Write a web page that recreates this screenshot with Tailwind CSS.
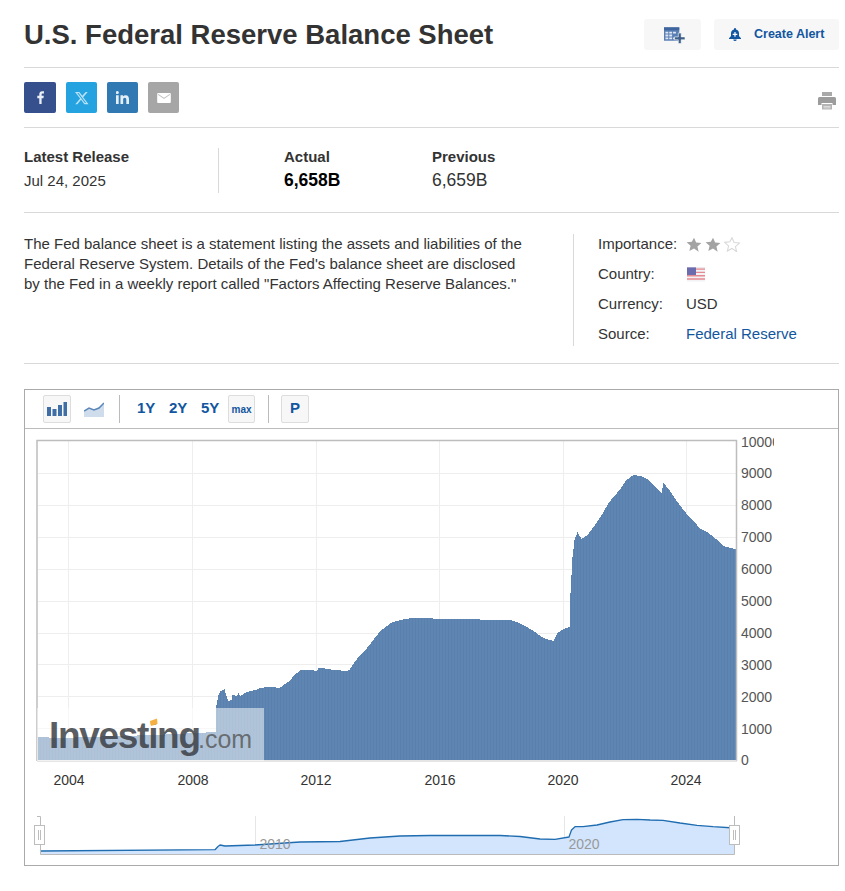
<!DOCTYPE html>
<html lang="en">
<head>
  <meta charset="UTF-8" />
  <title>U.S. Federal Reserve Balance Sheet</title>
  <script src="https://cdn.jsdelivr.net/npm/@tailwindcss/browser@4"></script>
</head>
<body class="bg-white text-[#333] font-['Liberation_Sans',Arial,sans-serif] text-[15px]">
  <div class="w-[845px] h-[891px] overflow-hidden pl-[24px] pr-[6px]">

    <!-- Title -->
    <div class="flex justify-between h-[68px] pt-[19px] border-b border-[#d9d9d9]">
      <h1 class="text-[27.5px] leading-[31px] font-bold">U.S. Federal Reserve Balance Sheet</h1>
      <div class="flex gap-[13px] h-[31px]">
        <button class="w-[57px] bg-[#f7f7f8] rounded-[3px] flex items-center justify-center pl-[3px]">
          <svg width="21" height="18" viewBox="0 0 22 18">
            <rect x="0" y="1" width="16" height="14" fill="#5a7fb5" />
            <rect x="0" y="1" width="16" height="3" fill="#3f659f" />
            <path d="M1.5 5.5h3v2h-3zM5.5 5.5h3v2h-3zM9.5 5.5h3v2h-3zM1.5 8.5h3v2h-3zM5.5 8.5h3v2h-3zM1.5 11.5h3v2h-3zM5.5 11.5h3v2h-3zM9.5 11.5h3v2h-3z" fill="#dfe7f3" />
            <path d="M15 7v4h-4v3h4v4h3v-4h4v-3h-4V7z" fill="#3f5f88" stroke="#fff" stroke-width=".6" />
          </svg>
        </button>
        <button class="w-[125px] bg-[#f7f7f8] rounded-[3px] flex items-center pl-[15px] pb-[1px] gap-[13px] text-[#1256a0] text-[12.5px] font-bold">
          <svg width="12" height="13" viewBox="0 0 12 13">
            <path d="M6 0a1 1 0 0 1 1 1v.6c2 .5 3 2 3 4V8l2 2.200V11H0v-.8L2 8V5.600c0-2 1-3.500 3-4V1a1 1 0 0 1 1-1zM4.300 11.500h3.400a1.700 1.500 0 0 1-3.400 0z" fill="#1256a0" />
            <path d="M5.400 4h1.200v1.800h1.700V7H6.600v1.800H5.400V7H3.700V5.800h1.700z" fill="#fff" />
          </svg>
          Create Alert
        </button>
      </div>
    </div>

    <!-- Share icons -->
    <div class="flex justify-between h-[60px] pt-[14px] border-b border-[#d9d9d9]">
      <div class="flex gap-[10px] h-[31px]">
        <a class="w-[32px] rounded-[2px] bg-[#36508e] flex items-center justify-center">
          <svg width="7" height="13" viewBox="0 0 8 15"><path d="M5.300 15V8.300h2.100l.4-2.700H5.300V4.100c0-.8.3-1.300 1.300-1.300H8V.4C7.600.3 6.800.2 5.900.2 3.900.2 2.600 1.400 2.600 3.600v2H.3v2.700h2.300V15z" fill="#e9edf5" /></svg>
        </a>
        <a class="w-[31px] rounded-[2px] bg-[#25a3e0] flex items-center justify-center">
          <svg width="14" height="14" viewBox="0 0 24 24"><path d="M18.200 1.500h3.600l-7.800 9 9.200 12.100h-7.200l-5.600-7.400-6.400 7.400H.4l8.400-9.600L0 1.500h7.400l5.100 6.700zM17 20.500h2L6.100 3.500H4z" fill="#b9e2f7" /></svg>
        </a>
        <a class="w-[31px] rounded-[2px] bg-[#3079b3] flex items-center justify-center">
          <svg width="13" height="13" viewBox="0 0 14 14"><path d="M0 4.700h2.900V14H0zM1.450 0a1.600 1.600 0 1 1 0 3.300 1.600 1.600 0 0 1 0-3.300zM4.800 4.700h2.700V6c.5-.9 1.500-1.500 2.900-1.500 2.800 0 3.600 1.800 3.600 4.400V14h-2.900V9.500c0-1.200-.3-2.300-1.600-2.300s-1.800 1-1.800 2.300V14H4.800z" fill="#e3eef6" /></svg>
        </a>
        <a class="w-[31px] rounded-[2px] bg-[#a6a6a6] flex items-center justify-center">
          <svg width="14" height="10" viewBox="0 0 15 11"><rect width="15" height="11" rx="1" fill="#fff" /><path d="M1 1.500l6.500 4.500L14 1.500" fill="none" stroke="#c4c4c4" stroke-width="1.200" /></svg>
        </a>
      </div>
      <div class="pt-[10px] pr-[3px]">
        <svg width="18" height="18" viewBox="0 0 18 18">
          <path d="M4 0h10v4H4z" fill="#a9a9a9" />
          <path d="M1.500 5h15A1.500 1.500 0 0 1 18 6.500V13h-3.500v-2h-11v2H0V6.500A1.500 1.500 0 0 1 1.500 5z" fill="#9c9c9c" />
          <path d="M4 12h10v5.500H4z" fill="#b4b4b4" />
          <path d="M5.500 14h7v.8h-7zM5.500 15.500h7v.8h-7z" fill="#e6e6e6" />
        </svg>
      </div>
    </div>

    <!-- Latest release -->
    <div class="h-[85px] pt-[20px] border-b border-[#d9d9d9]">
      <div class="flex h-[45px]">
        <div class="w-[195px] border-r border-[#d9d9d9]">
          <div class="font-bold leading-[18px]">Latest Release</div>
          <div class="leading-[18px] mt-[6px]">Jul 24, 2025</div>
        </div>
        <div class="w-[148px] ml-[65px]">
          <div class="font-bold leading-[18px]">Actual</div>
          <div class="font-bold text-[17.5px] leading-[20px] mt-[4px] text-black">6,658B</div>
        </div>
        <div>
          <div class="font-bold leading-[18px]">Previous</div>
          <div class="text-[17.5px] leading-[20px] mt-[4px]">6,659B</div>
        </div>
      </div>
    </div>

    <!-- Description and overview -->
    <div class="flex h-[151px] pt-[21px] border-b border-[#d9d9d9]">
      <p class="w-[505px] mr-[44px] leading-[20px]">The Fed balance sheet is a statement listing the assets and liabilities of the Federal Reserve System. Details of the Fed's balance sheet are disclosed by the Fed in a weekly report called "Factors Affecting Reserve Balances."</p>
      <div class="h-[112px] border-l border-[#d9d9d9] pl-[24px] flex flex-col gap-[10px] leading-[20px]">
        <div class="flex">
          <span class="w-[88px]">Importance:</span>
          <span class="flex items-center gap-[3px]">
            <svg width="16" height="15" viewBox="1 1 22 21"><path d="M12 2l3 6.800 7.400.7-5.600 4.900 1.700 7.300L12 17l-6.500 3.700 1.700-7.300L1.600 8.500 9 7.800z" fill="#a3a3a3" /></svg>
            <svg width="16" height="15" viewBox="1 1 22 21"><path d="M12 2l3 6.800 7.400.7-5.600 4.900 1.700 7.300L12 17l-6.500 3.700 1.700-7.300L1.600 8.500 9 7.800z" fill="#a3a3a3" /></svg>
            <svg width="16" height="15" viewBox="1 1 22 21"><path d="M12 2l3 6.800 7.400.7-5.600 4.900 1.700 7.300L12 17l-6.500 3.700 1.700-7.300L1.600 8.500 9 7.800z" fill="#fff" stroke="#d8d8d8" stroke-width="1.500" /></svg>
          </span>
        </div>
        <div class="flex">
          <span class="w-[88px]">Country:</span>
          <span class="flex items-center pl-[1px]">
            <svg width="18" height="15" viewBox="0 0 19 15">
              <rect width="19" height="15" fill="#f3f3f6" />
              <path d="M0 1h19v1.500H0zM0 4.500h19V6H0zM0 8h19v1.500H0zM0 11.500h19V13H0z" fill="#e58a90" />
              <rect width="19" height="1" y="0" fill="#e9dfe3" />
              <rect width="9.500" height="8" fill="#6a6cae" />
            </svg>
          </span>
        </div>
        <div class="flex">
          <span class="w-[88px]">Currency:</span>
          <span>USD</span>
        </div>
        <div class="flex">
          <span class="w-[88px]">Source:</span>
          <a class="text-[#1256a0]">Federal Reserve</a>
        </div>
      </div>
    </div>

    <!-- Chart -->
    <div class="mt-[25px] w-[815px] h-[477px] border border-[#aaa]">
      <div class="relative flex items-center h-[39px] border-b border-[#bbb] pl-[18px] pb-[1px]">
        <button class="w-[28px] h-[28px] bg-[#f7f7f7] border border-[#ddd] rounded-[2px] flex items-center justify-center">
          <svg width="20" height="14" viewBox="0 0 20 14">
            <path d="M0 5h4v9H0zM5.500 7h4v7h-4zM11 3h4v11h-4zM16.500 0H20v14h-3.500z" fill="#3f6ea6" />
          </svg>
        </button>
        <span class="w-[20px] h-[18px] ml-[13px]">
          <svg width="20" height="18" viewBox="0 0 20 18">
            <path d="M0 11l5-3 5 2 5-2 5-5v14H0z" fill="#cfdcec" />
            <path d="M0 11l5-3 5 2 5-2 5-5" fill="none" stroke="#5b87b8" stroke-width="1.500" />
          </svg>
        </span>
        <span class="w-[1px] h-[28px] bg-[#bbb] ml-[15px]"></span>
        <div class="flex gap-[14px] ml-[17px] text-[15px] font-bold text-[#1256a0]">
          <span class="w-[18px]">1Y</span>
          <span class="w-[18px]">2Y</span>
          <span class="w-[18px]">5Y</span>
        </div>
        <button class="w-[27px] h-[28px] ml-[9px] mt-[1px] bg-[#f7f7f7] border border-[#ddd] rounded-[2px] text-[10px] font-bold text-[#1256a0]">max</button>
        <span class="w-[1px] h-[28px] bg-[#bbb] ml-[13px]"></span>
        <button class="w-[28px] h-[28px] ml-[12px] bg-[#f7f7f7] border border-[#ddd] rounded-[2px] text-[15px] font-bold text-[#1256a0]">P</button>
      </div>

      <svg class="block" width="813" height="437" viewBox="25 429 813 437" font-family="'Liberation Sans', Arial, sans-serif" font-size="14">
        <defs>
          <pattern id="bars" x="37" y="0" width="3" height="10" patternUnits="userSpaceOnUse">
            <rect width="3" height="10" fill="#5f86b3" />
            <rect width="1" height="10" fill="#5a80ad" />
          </pattern>
          <clipPath id="labelClip"><rect x="738" y="430" width="36" height="30" /></clipPath>
        </defs>

        <!-- grid -->
        <g stroke="#eeeeee" stroke-width="1">
          <path d="M38 473.500H736M38 505.500H736M38 537.500H736M38 569.500H736M38 601.500H736M38 633.500H736M38 664.500H736M38 696.500H736M38 728.500H736" />
          <path d="M68.500 441V760M192.500 441V760M316.500 441V760M439.500 441V760M563.500 441V760M686.500 441V760" />
        </g>

        <!-- balance area, filled in by the script below -->
        <path id="area" fill="url(#bars)" />

        <!-- plot frame -->
        <path d="M37 761V440.500H736.500V761" fill="none" stroke="#bdbdbd" stroke-width="1.500" />
        <path d="M37 761H737" stroke="#dcdcdc" stroke-width="1.500" />

        <!-- watermark -->
        <rect x="37" y="708" width="227" height="53" fill="#fff" fill-opacity=".5" />
        <text x="49" y="748" font-size="37" font-weight="700" letter-spacing="-1.300" fill="#3c3f45" fill-opacity=".85">Investing</text>
        <text x="198" y="748" font-size="25" fill="#555" fill-opacity=".8">.com</text>
        <path d="M150 721l7-2.500.5 5.500-6.500 2z" fill="#f5b041" />

        <!-- y axis -->
        <g fill="#555">
          <text x="741" y="447" clip-path="url(#labelClip)">10000</text>
          <text x="741" y="478">9000</text>
          <text x="741" y="510">8000</text>
          <text x="741" y="542">7000</text>
          <text x="741" y="574">6000</text>
          <text x="741" y="606">5000</text>
          <text x="741" y="638">4000</text>
          <text x="741" y="670">3000</text>
          <text x="741" y="702">2000</text>
          <text x="741" y="734">1000</text>
          <text x="741" y="765">0</text>
        </g>

        <!-- x axis -->
        <g fill="#333" text-anchor="middle">
          <text x="69" y="785">2004</text>
          <text x="193" y="785">2008</text>
          <text x="316" y="785">2012</text>
          <text x="440" y="785">2016</text>
          <text x="563" y="785">2020</text>
          <text x="686" y="785">2024</text>
        </g>

        <!-- navigator -->
        <path d="M255.500 816V846M564.500 816V838" stroke="#e6e6e6" />
        <path fill="#d2e5fc" d="M41 854V851L215 849.700L218 846.500L220 845L225 846L255 845L300 842L340 841.500L370 838L400 836L430 835.500L500 835.500L520 836.500L540 839L555 839.300L569 837L571.500 830L575 826.700L583 826.700L597 825L610 822L623 819.700L637 819.300L650 820L663 820.300L680 823L697 825.300L713 826.700L734 828V854Z" />
        <path fill="none" stroke="#1f6cb0" stroke-width="1.300" stroke-linejoin="round" d="M41 851L215 849.700L218 846.500L220 845L225 846L255 845L300 842L340 841.500L370 838L400 836L430 835.500L500 835.500L520 836.500L540 839L555 839.300L569 837L571.500 830L575 826.700L583 826.700L597 825L610 822L623 819.700L637 819.300L650 820L663 820.300L680 823L697 825.300L713 826.700L734 828" />
        <text x="275" y="849" text-anchor="middle" fill="#999">2010</text>
        <text x="584" y="849" text-anchor="middle" fill="#999">2020</text>
        <path d="M37 816.500H40.500V854.500H734.500V816" fill="none" stroke="#bbbbbb" />
        <g fill="#fff" stroke="#bdbdbd">
          <rect x="34.500" y="825.500" width="10" height="19" />
          <rect x="729.500" y="825.500" width="10" height="19" />
        </g>
        <path d="M38.500 830V840M40.500 830V840M733.500 830V840M735.500 830V840" stroke="#bdbdbd" />
      </svg>
    </div>
  </div>

  <script>
    // rough outline of the series, read off in px: [x, top of bar]
    const outline = [[38,737],[60,738],[100,736.5],[155,735],[215,732],[216,705],[218,695],[220,691],[224,689],[226,696],[228,701],[231,700],[232,695],[234,695],[236,696],[238,693],[240,696],[244,693],[250,691],[255,690],[260,688],[266,687],[272,687],[279,688],[283,685],[289,681],[294,675],[300,670],[312,670],[316,671],[318,668],[322,667.5],[326,669],[336,670],[345,671],[349,670],[352,665],[358,657],[365,650],[375,637],[380,631],[385,627],[392,622],[400,620],[408,618.5],[420,618],[445,619],[480,619.5],[510,620],[518,622.5],[525,626],[533,631],[540,636],[546,639],[553,641],[557,633],[563,629],[569,627],[570,593],[572,557],[574,540],[577,532],[581,539],[587,535],[593,527],[600,517],[608,503],[613,497],[620,489],[625,481],[630,477],[633,475],[640,476],[647,479],[652,484],[661,493],[663,483],[668,489],[677,502],[687,515],[693,521],[700,529],[707,532],[713,537],[718,541],[723,546],[730,548],[736,549]];

    function topAt(x) {
      for (let i = 1; i < outline.length; i++) {
        const [x0, y0] = outline[i - 1];
        const [x1, y1] = outline[i];
        if (x <= x1) return y0 + (y1 - y0) * (x - x0) / (x1 - x0);
      }
      return outline[outline.length - 1][1];
    }

    // one step per pixel column, the bars are narrower than a pixel in the original
    let d = "M38 760";
    for (let x = 38; x < 736; x++) {
      d += "V" + Math.round(topAt(x)) + "H" + (x + 1);
    }
    d += "V760Z";
    document.getElementById("area").setAttribute("d", d);
  </script>
</body>
</html>
